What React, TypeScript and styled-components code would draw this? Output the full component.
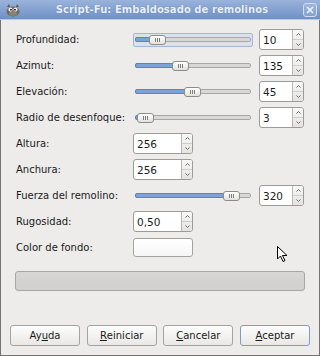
import React from 'react';
import styled, { createGlobalStyle } from 'styled-components';

const Global = createGlobalStyle`
  html, body { margin: 0; padding: 0; background: #edeceb; }
  body {
    font-family: "DejaVu Sans", "Liberation Sans", sans-serif;
    font-size: 10px;
    color: #1a1a1a;
  }
`;

const Window = styled.div`
  position: relative;
  width: 320px;
  height: 356px;
  display: flex;
  flex-direction: column;
  background: #edeceb;
  overflow: hidden;
`;

const TitleBar = styled.div`
  height: 20px;
  flex: none;
  display: flex;
  align-items: center;
  padding: 0 3px 0 5px;
  background: linear-gradient(#9ab3db, #6f90c6);
  border-bottom: 1px solid #b9c9e2;
  box-sizing: border-box;
`;

const TitleText = styled.div`
  flex: 1;
  text-align: center;
  font-weight: bold;
  font-size: 10px;
  color: #e9eff9;
  text-shadow: 0 0 1px rgba(40, 70, 120, 0.5);
  letter-spacing: 0.05px;
`;

const CloseBtn = styled.div`
  width: 14px;
  height: 14px;
  box-sizing: border-box;
  border: 1px solid #d2ddef;
  border-radius: 3px;
  background: rgba(255, 255, 255, 0.12);
  display: flex;
  align-items: center;
  justify-content: center;
`;

const Body = styled.div`
  flex: 1;
  display: flex;
  flex-direction: column;
  border: 1px solid #737373;
  border-top: none;
  padding: 9px 14px 9px 14px;
`;

const Form = styled.div`
  display: grid;
  grid-template-columns: 117px 1fr;
  grid-auto-rows: 21px;
  row-gap: 5px;
  padding-left: 1px;
`;

const Label = styled.div`
  align-self: center;
  white-space: nowrap;
`;

const Controls = styled.div`
  display: flex;
  align-items: center;
  gap: 6px;
`;

const SliderBox = styled.div<{ $focus?: boolean }>`
  position: relative;
  width: 120px;
  height: 14px;
  box-sizing: border-box;
  border: 1px solid ${p => (p.$focus ? '#a3b6d6' : 'transparent')};
  border-radius: 2px;
  background: ${p => (p.$focus ? '#dde2ea' : 'transparent')};
  display: flex;
  align-items: center;
  padding: 0 1px;
`;

const Track = styled.div`
  position: relative;
  flex: 1;
  height: 5px;
  box-sizing: border-box;
  border: 1px solid #a7a7a7;
  border-radius: 2px;
  background: #d9d8d6;
`;

const Fill = styled.div`
  position: absolute;
  left: -1px;
  top: -1px;
  bottom: -1px;
  box-sizing: border-box;
  border: 1px solid #5c84be;
  border-radius: 2px 0 0 2px;
  background: #7da2d6;
`;

const Thumb = styled.div`
  position: absolute;
  top: 1px;
  width: 17px;
  height: 10px;
  box-sizing: border-box;
  border: 1px solid #8c8c8c;
  border-radius: 3px;
  background: linear-gradient(#ffffff, #e2e1df);
  display: flex;
  align-items: center;
  justify-content: center;
  gap: 1px;
`;

const Grip = styled.span`
  width: 1px;
  height: 4px;
  background: #7d7d7d;
`;

const Spin = styled.div<{ $w: number }>`
  width: ${p => p.$w}px;
  height: 21px;
  box-sizing: border-box;
  display: flex;
  border: 1px solid #9b9b9b;
  border-radius: 3px;
  background: #fff;
  overflow: hidden;
`;

const SpinText = styled.div`
  flex: 1;
  display: flex;
  align-items: center;
  padding-left: 3px;
  font-size: 10.5px;
  color: #1c1c1c;
`;

const SpinArrows = styled.div`
  width: 10px;
  display: flex;
  flex-direction: column;
  border-left: 1px solid #b8b8b8;
  background: linear-gradient(#f8f8f7, #e4e3e1);
`;

const ArrowBtn = styled.div`
  flex: 1;
  display: flex;
  align-items: center;
  justify-content: center;
  & + & { border-top: 1px solid #cfcfcf; }
`;

const ColorBtn = styled.div`
  width: 60px;
  height: 19px;
  box-sizing: border-box;
  border: 1px solid #a2a2a2;
  border-radius: 3px;
  background: linear-gradient(#ffffff, #f6f6f6);
`;

const Progress = styled.div`
  margin-top: 13px;
  height: 20px;
  box-sizing: border-box;
  border: 1px solid #a8a7a5;
  border-radius: 3px;
  background: linear-gradient(#d8d6d4, #d2d0ce);
`;

const ButtonRow = styled.div`
  margin-top: auto;
  display: flex;
  justify-content: space-between;
  padding: 0 -5px;
  margin-left: -5px;
  margin-right: -5px;
`;

const Button = styled.div<{ $default?: boolean }>`
  width: 70px;
  height: 21px;
  box-sizing: border-box;
  border: 1px solid ${p => (p.$default ? '#7f9bc7' : '#a3a3a3')};
  border-radius: 3px;
  background: linear-gradient(#fdfdfd, #e9e8e6);
  display: flex;
  align-items: center;
  justify-content: center;
  color: #1a1a1a;
`;

const Cursor = styled.svg`
  position: absolute;
  left: 277px;
  top: 246px;
`;

const Up = () => (
  <svg width="5" height="3" viewBox="0 0 5 3">
    <path d="M0.5 2.5 L2.5 0.5 L4.5 2.5" fill="none" stroke="#6a6a6a" strokeWidth="1" />
  </svg>
);
const Down = () => (
  <svg width="5" height="3" viewBox="0 0 5 3">
    <path d="M0.5 0.5 L2.5 2.5 L4.5 0.5" fill="none" stroke="#6a6a6a" strokeWidth="1" />
  </svg>
);

const SpinBox = ({ value, w }: { value: string; w: number }) => (
  <Spin $w={w}>
    <SpinText>{value}</SpinText>
    <SpinArrows>
      <ArrowBtn><Up /></ArrowBtn>
      <ArrowBtn><Down /></ArrowBtn>
    </SpinArrows>
  </Spin>
);

const Slider = ({ thumb, focus }: { thumb: number; focus?: boolean }) => (
  <SliderBox $focus={focus}>
    <Track>
      <Fill style={{ width: thumb + 2 }} />
    </Track>
    <Thumb style={{ left: thumb }}>
      <Grip /><Grip /><Grip />
    </Thumb>
  </SliderBox>
);

const U = styled.span`text-decoration: underline;`;

const Wilber = () => (
  <svg width="16" height="14" viewBox="0 0 16 14">
    <path d="M2 4 L4 1 L5 4 Z" fill="#5e574b" />
    <path d="M14 4 L12 1 L11 4 Z" fill="#5e574b" />
    <ellipse cx="8" cy="8.5" rx="6.5" ry="5" fill="#6f685b" />
    <ellipse cx="8" cy="10.5" rx="4" ry="2.5" fill="#8a8274" />
    <circle cx="5.5" cy="6.5" r="2" fill="#fff" />
    <circle cx="10.5" cy="6.5" r="2" fill="#fff" />
    <circle cx="6" cy="6.7" r="0.9" fill="#000" />
    <circle cx="10" cy="6.7" r="0.9" fill="#000" />
  </svg>
);

export default function App() {
  return (
    <>
      <Global />
      <Window>
        <TitleBar>
          <Wilber />
          <TitleText>Script-Fu: Embaldosado de remolinos</TitleText>
          <CloseBtn>
            <svg width="8" height="8" viewBox="0 0 8 8">
              <path d="M1 1 L7 7 M7 1 L1 7" stroke="#eef3fb" strokeWidth="1.6" />
            </svg>
          </CloseBtn>
        </TitleBar>
        <Body>
          <Form>
            <Label>Profundidad:</Label>
            <Controls><Slider thumb={15} focus /><SpinBox value="10" w={45} /></Controls>
            <Label>Azimut:</Label>
            <Controls><Slider thumb={38} /><SpinBox value="135" w={45} /></Controls>
            <Label>Elevación:</Label>
            <Controls><Slider thumb={50} /><SpinBox value="45" w={45} /></Controls>
            <Label>Radio de desenfoque:</Label>
            <Controls><Slider thumb={3} /><SpinBox value="3" w={45} /></Controls>
            <Label>Altura:</Label>
            <Controls><SpinBox value="256" w={60} /></Controls>
            <Label>Anchura:</Label>
            <Controls><SpinBox value="256" w={60} /></Controls>
            <Label>Fuerza del remolino:</Label>
            <Controls><Slider thumb={89} /><SpinBox value="320" w={45} /></Controls>
            <Label>Rugosidad:</Label>
            <Controls><SpinBox value="0,50" w={60} /></Controls>
            <Label>Color de fondo:</Label>
            <Controls><ColorBtn /></Controls>
          </Form>
          <Progress />
          <ButtonRow>
            <Button>Ay<U>u</U>da</Button>
            <Button><U>R</U>einiciar</Button>
            <Button><U>C</U>ancelar</Button>
            <Button $default><U>A</U>ceptar</Button>
          </ButtonRow>
        </Body>
        <Cursor width="12" height="17" viewBox="0 0 12 17">
          <path d="M0.5 0.5 L0.5 13 L3.5 10 L6 15.5 L8 14.5 L5.5 9.5 L10 9.5 Z" fill="#fff" stroke="#000" strokeWidth="1" strokeLinejoin="round" />
        </Cursor>
      </Window>
    </>
  );
}
